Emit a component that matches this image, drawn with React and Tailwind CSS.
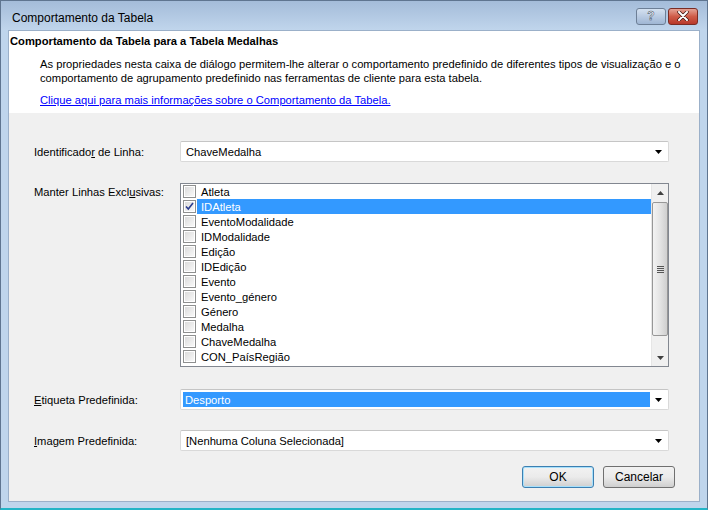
import React from "react";

const items = [
  "Atleta",
  "IDAtleta",
  "EventoModalidade",
  "IDModalidade",
  "Edição",
  "IDEdição",
  "Evento",
  "Evento_género",
  "Género",
  "Medalha",
  "ChaveMedalha",
  "CON_PaísRegião",
];

function Arrow() {
  return (
    <svg width="7" height="4" viewBox="0 0 7 4" className="block">
      <path d="M0 0H7L3.5 4Z" fill="#000" />
    </svg>
  );
}

function Combo({ value, selected }) {
  return (
    <div className="w-[489px] h-[21px] bg-white border border-[#d9d9d9] border-t-[#c5c5c5] flex items-center rounded-[2px]">
      <div className="flex-1 h-full flex items-center px-[2px]">
        {selected ? (
          <div className="w-full h-[15px] bg-[#3399ff] text-white flex items-center pl-[2px]">{value}</div>
        ) : (
          <div className="pl-[3px] text-black">{value}</div>
        )}
      </div>
      <div className="w-[16px] flex items-center justify-center pr-[3px]">
        <Arrow />
      </div>
    </div>
  );
}

function CheckBox({ checked }) {
  return (
    <div className="w-[13px] h-[13px] border border-[#8e8f8f] bg-white p-[1px] shrink-0">
      <div className="w-full h-full bg-gradient-to-br from-[#dcdcdc] to-[#f8f8f8] flex items-center justify-center">
        {checked && (
          <svg width="9" height="9" viewBox="0 0 9 9">
            <path d="M1 4.5L3.3 7L8 1" stroke="#2b3d8f" strokeWidth="1.6" fill="none" />
          </svg>
        )}
      </div>
    </div>
  );
}

function ScrollBar() {
  return (
    <div className="w-[17px] h-full bg-[#f0f0f0] flex flex-col border-l border-[#e6e6e6]">
      <div className="h-[18px] flex items-center justify-center">
        <svg width="7" height="4" viewBox="0 0 7 4">
          <path d="M0 4H7L3.5 0Z" fill="#404040" />
        </svg>
      </div>
      <div className="h-[134px] border border-[#979797] rounded-[2px] bg-gradient-to-r from-[#f3f3f3] via-[#e4e4e4] to-[#cfcfcf] flex items-center justify-center">
        <div className="flex flex-col gap-[1px]">
          <div className="w-[7px] h-[1px] bg-[#555]" />
          <div className="w-[7px] h-[1px] bg-[#555]" />
          <div className="w-[7px] h-[1px] bg-[#555]" />
          <div className="w-[7px] h-[1px] bg-[#555]" />
        </div>
      </div>
      <div className="flex-1 flex items-end justify-center pb-[6px]">
        <svg width="7" height="4" viewBox="0 0 7 4">
          <path d="M0 0H7L3.5 4Z" fill="#404040" />
        </svg>
      </div>
    </div>
  );
}

function Button({ children, primary }) {
  return (
    <div
      className={
        "w-[72px] h-[22px] rounded-[3px] border flex items-center justify-center text-[12px] text-black bg-gradient-to-b from-[#f2f2f2] via-[#ebebeb] to-[#cfcfcf] " +
        (primary ? "border-[#3c7fb1] shadow-[inset_0_0_0_1px_#a7e0fb]" : "border-[#707070]")
      }
    >
      {children}
    </div>
  );
}

export default function App() {
  return (
    <div
      className="w-[708px] h-[510px] bg-[#bfd5ec] border-l border-t border-r border-[#5f7590] border-b-2 border-b-[#23b4c6] flex flex-col text-[11.2px] text-black leading-[14px]"
      style={{ fontFamily: '"Liberation Sans", Arial, sans-serif' }}
    >
      {/* Title bar */}
      <div className="h-[29px] shrink-0 bg-gradient-to-b from-[#a4bcd9] to-[#c0d5ec] flex items-center pl-[11px] pr-[9px]">
        <div className="flex-1 text-[12px] pt-[5px] text-black">Comportamento da Tabela</div>
        <div className="flex gap-[2px] pt-[1px]">
          <div className="w-[30px] h-[17px] rounded-[3px] border border-[#6d7f96] bg-gradient-to-b from-[#d4e1f0] via-[#b9cbe2] to-[#9fb6d4] flex items-center justify-center">
            <span className="text-white font-bold text-[12px] leading-none" style={{ WebkitTextStroke: "0.5px #3a4a5e" }}>?</span>
          </div>
          <div className="w-[30px] h-[17px] rounded-[3px] border border-[#7a2c24] bg-gradient-to-b from-[#e3a194] via-[#cf5b48] to-[#b8382a] flex items-center justify-center">
            <svg width="12" height="10" viewBox="0 0 12 10">
              <path d="M2 1L10 9M10 1L2 9" stroke="#3d1410" strokeWidth="3.4" strokeLinecap="round" />
              <path d="M2 1L10 9M10 1L2 9" stroke="#fff" strokeWidth="2" strokeLinecap="round" />
            </svg>
          </div>
        </div>
      </div>

      {/* Client */}
      <div className="flex-1 mx-[7px] mb-[6px] flex flex-col border border-[#9bb0c9] bg-[#f0f0f0]">
        {/* White header */}
        <div className="h-[82px] shrink-0 bg-white pt-[3px] pl-[1px]">
          <div className="font-bold h-[14px]">Comportamento da Tabela para a Tabela Medalhas</div>
          <div className="ml-[30px] mt-[9px]">
            <div className="h-[14px] whitespace-nowrap">
              As propriedades nesta caixa de diálogo permitem-lhe alterar o comportamento predefinido de diferentes tipos de visualização e o
            </div>
            <div className="h-[14px] whitespace-nowrap">
              comportamento de agrupamento predefinido nas ferramentas de cliente para esta tabela.
            </div>
            <div className="h-[14px] mt-[8px] text-[#0000ff] underline">
              Clique aqui para mais informações sobre o Comportamento da Tabela.
            </div>
          </div>
        </div>

        {/* Form */}
        <div className="flex-1 flex flex-col pl-[25px] pt-[28px]">
          <div className="flex items-center">
            <div className="w-[146px]">
              Identificado<span className="underline">r</span> de Linha:
            </div>
            <Combo value="ChaveMedalha" />
          </div>

          <div className="flex mt-[21px]">
            <div className="w-[146px] pt-[2px]">
              Manter Linhas Excl<span className="underline">u</span>sivas:
            </div>
            <div className="w-[489px] h-[184px] bg-white border border-[#828790] flex">
              <div className="flex-1 flex flex-col">
                {items.map((it, i) => (
                  <div key={it} className="h-[15px] flex items-center pl-[2px]">
                    <CheckBox checked={i === 1} />
                    <div
                      className={
                        "flex-1 h-full flex items-center pl-[4px] ml-[1px] " +
                        (i === 1 ? "bg-[#3399ff] text-white" : "")
                      }
                    >
                      {it}
                    </div>
                  </div>
                ))}
              </div>
              <ScrollBar />
            </div>
          </div>

          <div className="flex items-center mt-[22px]">
            <div className="w-[146px]">
              <span className="underline">E</span>tiqueta Predefinida:
            </div>
            <Combo value="Desporto" selected />
          </div>

          <div className="flex items-center mt-[20px]">
            <div className="w-[146px]">
              <span className="underline">I</span>magem Predefinida:
            </div>
            <Combo value="[Nenhuma Coluna Selecionada]" />
          </div>

          <div className="flex justify-end gap-[9px] mt-[15px] pr-[24px]">
            <Button primary>OK</Button>
            <Button>Cancelar</Button>
          </div>
        </div>
      </div>
    </div>
  );
}
